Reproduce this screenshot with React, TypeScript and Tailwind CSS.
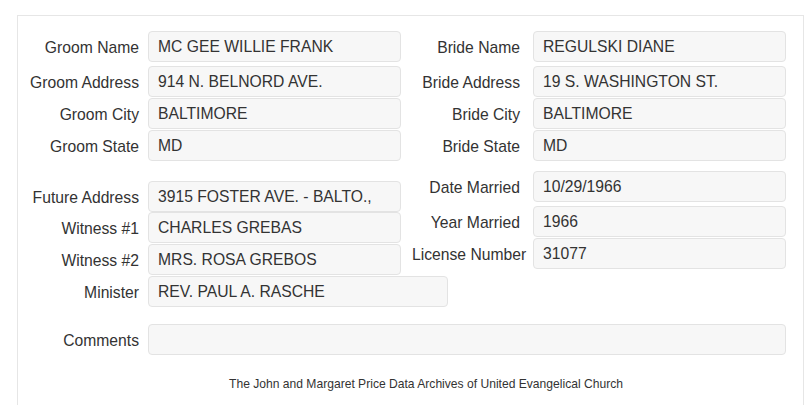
import React from "react";

type FieldProps = {
  label: string;
  value?: string;
  gap: string;
  inputW: string;
  mt?: string;
  labelW?: string;
};

function Field({ label, value = "", gap, inputW, mt = "", labelW = "w-[111px]" }: FieldProps) {
  return (
    <div className={`flex items-center h-[31px] ${mt}`}>
      <div className={`${labelW} shrink-0 text-right whitespace-nowrap pt-[2px] text-[15.7px] text-[#333]`}>
        {label}
      </div>
      <div
        className={`${gap} ${inputW} h-[31px] shrink-0 rounded-[4px] border border-[#e3e3e3] bg-[#f7f7f7] pl-[9px] flex items-center pt-[1px] text-[15.7px] text-[#333] whitespace-nowrap overflow-hidden`}
      >
        {value}
      </div>
    </div>
  );
}

export default function App() {
  return (
    <div
      className="w-[805px] h-[405px] overflow-hidden bg-white"
      style={{ fontFamily: '"Liberation Sans", Arial, sans-serif' }}
    >
      <div className="ml-[17px] mt-[15px] w-[787px] h-[420px] border border-[#e6e6e6] pl-[10px] pt-[15px]">
        {/* top section */}
        <div className="flex items-start">
          <div className="w-[373px] shrink-0">
            <Field label="Groom Name" value="MC GEE WILLIE FRANK" gap="ml-[9px]" inputW="w-[253px]" />
            <Field label="Groom Address" value="914 N. BELNORD AVE." gap="ml-[9px]" inputW="w-[253px]" mt="mt-[4px]" />
            <Field label="Groom City" value="BALTIMORE" gap="ml-[9px]" inputW="w-[253px]" mt="mt-[1px]" />
            <Field label="Groom State" value="MD" gap="ml-[9px]" inputW="w-[253px]" mt="mt-[1px]" />
          </div>
          <div className="ml-[8px] w-[377px] shrink-0">
            <Field label="Bride Name" value="REGULSKI DIANE" gap="ml-[13px]" inputW="w-[253px]" />
            <Field label="Bride Address" value="19 S. WASHINGTON ST." gap="ml-[13px]" inputW="w-[253px]" mt="mt-[4px]" />
            <Field label="Bride City" value="BALTIMORE" gap="ml-[13px]" inputW="w-[253px]" mt="mt-[1px]" />
            <Field label="Bride State" value="MD" gap="ml-[13px]" inputW="w-[253px]" mt="mt-[1px]" />
          </div>
        </div>

        {/* lower section */}
        <div className="flex items-start">
          <div className="w-[373px] shrink-0 mt-[20px]">
            <Field label="Future Address" value="3915 FOSTER AVE. - BALTO.," gap="ml-[9px]" inputW="w-[253px]" />
            <Field label="Witness #1" value="CHARLES GREBAS" gap="ml-[9px]" inputW="w-[253px]" />
            <Field label="Witness #2" value="MRS. ROSA GREBOS" gap="ml-[9px]" inputW="w-[253px]" mt="mt-[1px]" />
            <Field label="Minister" value="REV. PAUL A. RASCHE" gap="ml-[9px]" inputW="w-[300px]" mt="mt-[1px]" />
          </div>
          <div className="ml-[8px] w-[377px] shrink-0 mt-[10px]">
            <Field label="Date Married" value="10/29/1966" gap="ml-[13px]" inputW="w-[253px]" />
            <Field label="Year Married" value="1966" gap="ml-[13px]" inputW="w-[253px]" mt="mt-[4px]" />
            <Field
              label="License Number"
              value="31077"
              gap="ml-[16px]"
              inputW="w-[253px]"
              mt="mt-[1px]"
              labelW="w-[105px] ml-[3px]"
            />
          </div>
        </div>

        {/* comments */}
        <Field label="Comments" value="" gap="ml-[9px]" inputW="w-[638px]" mt="mt-[17px]" />

        <div className="mt-[21px] leading-[16px] text-[12.1px] text-[#333] text-center pl-[31px] pr-[10px]">
          The John and Margaret Price Data Archives of United Evangelical Church
        </div>
      </div>
    </div>
  );
}
